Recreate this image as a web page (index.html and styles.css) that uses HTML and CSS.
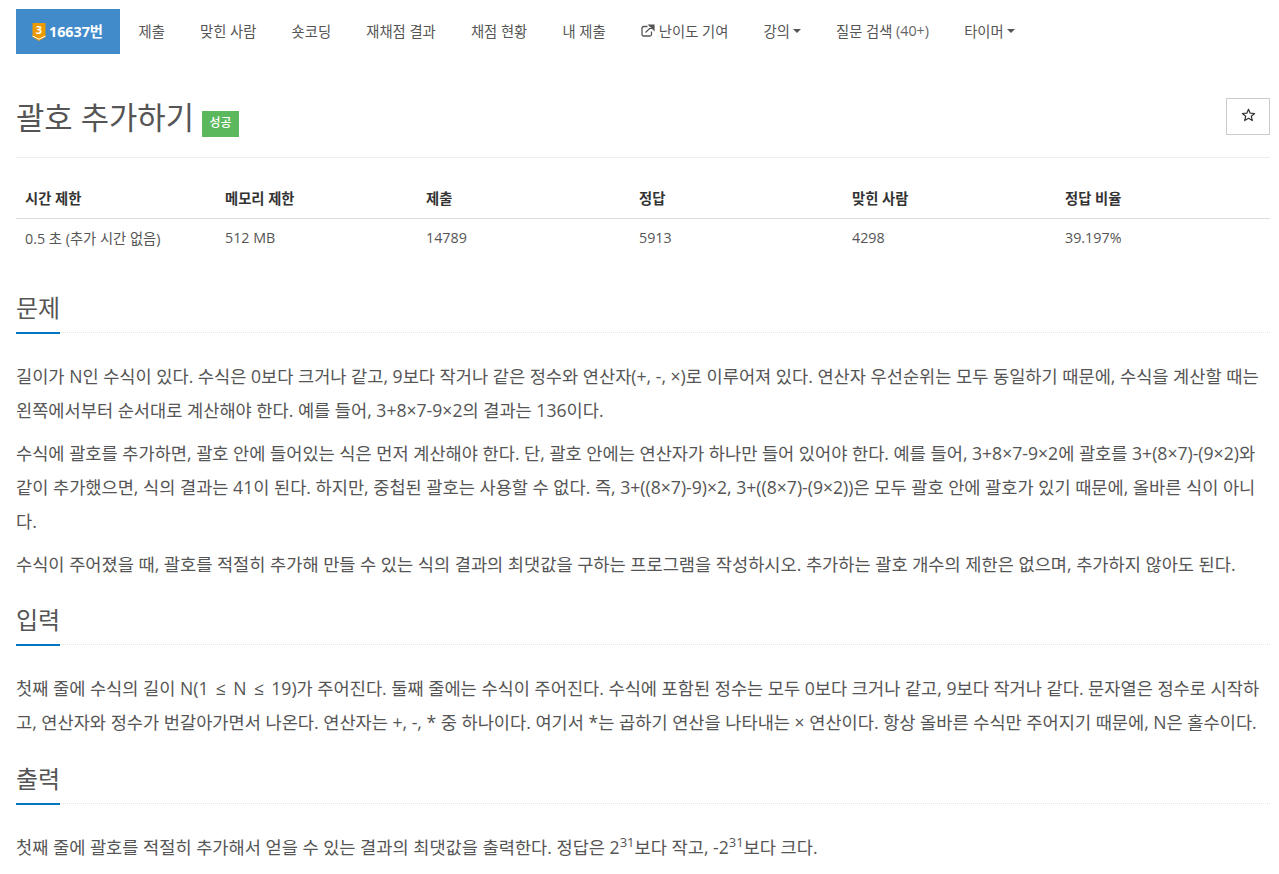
FILE: index.html
```html
<!DOCTYPE html>
<html lang="ko">
<head>
<meta charset="utf-8">
<title>괄호 추가하기</title>
<link rel="stylesheet" href="styles.css">
</head>
<body>
<div class="container">
  <ul class="nav">
    <li class="nav-item active">
      <svg class="tier" width="14" height="18" viewBox="0 0 14 18"><path d="M0.5 0H13.5V14L7 18L0.5 14Z" fill="#ec9a00"/><path d="M0.5 13L7 16.2L13.5 13" fill="none" stroke="#fff" stroke-width="1"/><text class="tier-num" x="7" y="11" text-anchor="middle">3</text></svg>
      <span>16637번</span>
    </li>
    <li class="nav-item">제출</li>
    <li class="nav-item">맞힌 사람</li>
    <li class="nav-item">숏코딩</li>
    <li class="nav-item">재채점 결과</li>
    <li class="nav-item">채점 현황</li>
    <li class="nav-item">내 제출</li>
    <li class="nav-item">
      <svg class="ext" width="14" height="13" viewBox="0 0 14 13"><path d="M10.5 7.5V10.5A1.5 1.5 0 0 1 9 12H2.5A1.5 1.5 0 0 1 1 10.5V4A1.5 1.5 0 0 1 2.5 2.5H6.5" fill="none" stroke="#555" stroke-width="1.3"/><path d="M4.5 8.5L11.5 1.8M8 1H13V6Z" fill="#555" stroke="#555" stroke-width="1.2"/></svg>
      <span>난이도 기여</span>
    </li>
    <li class="nav-item">강의<span class="caret"></span></li>
    <li class="nav-item">질문 검색&nbsp;<span class="count">(40+)</span></li>
    <li class="nav-item">타이머<span class="caret"></span></li>
  </ul>

  <div class="title-row">
    <h1 class="title">괄호 추가하기 <span class="label">성공</span></h1>
    <button class="star-btn"><svg width="15" height="14" viewBox="0 0 15 14"><path d="M7.5 1.2L9.2 5.2L13.6 5.5L10.3 8.3L11.3 12.6L7.5 10.3L3.7 12.6L4.7 8.3L1.4 5.5L5.8 5.2Z" fill="none" stroke="#333" stroke-width="1.2" stroke-linejoin="round"/></svg></button>
  </div>

  <table class="info">
    <thead>
      <tr><th class="c1">시간 제한</th><th class="c2">메모리 제한</th><th class="c3">제출</th><th class="c4">정답</th><th class="c5">맞힌 사람</th><th class="c6">정답 비율</th></tr>
    </thead>
    <tbody>
      <tr><td>0.5 초 (추가 시간 없음)</td><td>512 MB</td><td>14789</td><td>5913</td><td>4298</td><td>39.197%</td></tr>
    </tbody>
  </table>

  <section class="sec">
    <div class="head"><h2>문제</h2></div>
    <div class="body">
      <p>길이가 N인 수식이 있다. 수식은 0보다 크거나 같고, 9보다 작거나 같은 정수와 연산자(+, -, ×)로 이루어져 있다. 연산자 우선순위는 모두 동일하기 때문에, 수식을 계산할 때는 왼쪽에서부터 순서대로 계산해야 한다. 예를 들어, 3+8×7-9×2의 결과는 136이다.</p>
      <p>수식에 괄호를 추가하면, 괄호 안에 들어있는 식은 먼저 계산해야 한다. 단, 괄호 안에는 연산자가 하나만 들어 있어야 한다. 예를 들어, 3+8×7-9×2에 괄호를 3+(8×7)-(9×2)와 같이 추가했으면, 식의 결과는 41이 된다. 하지만, 중첩된 괄호는 사용할 수 없다. 즉, 3+((8×7)-9)×2, 3+((8×7)-(9×2))은 모두 괄호 안에 괄호가 있기 때문에, 올바른 식이 아니다.</p>
      <p>수식이 주어졌을 때, 괄호를 적절히 추가해 만들 수 있는 식의 결과의 최댓값을 구하는 프로그램을 작성하시오. 추가하는 괄호 개수의 제한은 없으며, 추가하지 않아도 된다.</p>
    </div>
  </section>

  <section class="sec">
    <div class="head"><h2>입력</h2></div>
    <div class="body">
      <p>첫째 줄에 수식의 길이 N(1 <span class="le">≤</span> N <span class="le">≤</span> 19)가 주어진다. 둘째 줄에는 수식이 주어진다. 수식에 포함된 정수는 모두 0보다 크거나 같고, 9보다 작거나 같다. 문자열은 정수로 시작하고, 연산자와 정수가 번갈아가면서 나온다. 연산자는 +, -, * 중 하나이다. 여기서 *는 곱하기 연산을 나타내는 × 연산이다. 항상 올바른 수식만 주어지기 때문에, N은 홀수이다.</p>
    </div>
  </section>

  <section class="sec">
    <div class="head"><h2>출력</h2></div>
    <div class="body">
      <p>첫째 줄에 괄호를 적절히 추가해서 얻을 수 있는 결과의 최댓값을 출력한다. 정답은 2<sup>31</sup>보다 작고, -2<sup>31</sup>보다 크다.</p>
    </div>
  </section>
</div>
</body>
</html>
```
FILE: styles.css
```css
* { box-sizing: border-box; }
html, body { margin: 0; padding: 0; }
body {
  font-family: "Open Sans", "Noto Sans CJK KR", sans-serif;
  color: #555;
  background: #fff;
  font-size: 14.3px;
  height: 874px;
  overflow: hidden;
}
.container { padding: 9px 9px 0 16px; }
.nav {
  list-style: none;
  margin: 0;
  padding: 0;
  display: flex;
  height: 45px;
}
.nav-item {
  display: flex;
  align-items: center;
  padding: 0 17.6px 3px;
  font-size: 14.3px;
  white-space: nowrap;
  color: #555;
}
.nav-item.active {
  background: #428bca;
  color: #fff;
  font-weight: 700;
  padding: 0 0 2px 16px;
  width: 104px;
  margin-right: 1px;
  gap: 3px;
}
.tier { flex: none; margin-top: 3px; overflow: visible; }
.tier-num { font-size: 11px; font-weight: 700; fill: #fff; }
.ext { margin-right: 4px; }
.caret {
  width: 0;
  height: 0;
  margin-left: 3px;
  margin-top: 2px;
  border-top: 4px solid #555;
  border-left: 4px solid transparent;
  border-right: 4px solid transparent;
}
.count { color: #666; }
.title-row {
  display: flex;
  justify-content: space-between;
  align-items: flex-start;
  margin-top: 44px;
  height: 60px;
  border-bottom: 1px solid #eee;
}
.title {
  margin: 0;
  font-size: 30.8px;
  font-weight: 400;
  line-height: 38px;
  color: #555;
  white-space: pre;
}
.label {
  display: inline-block;
  vertical-align: middle;
  background: #5cb85c;
  color: #fff;
  font-size: 12px;
  font-weight: 500;
  width: 37px;
  height: 26px;
  line-height: 24px;
  text-align: center;
  margin-top: 6px;
}
.star-btn {
  width: 44px;
  height: 37px;
  border: 1px solid #ccc;
  background: #fff;
  padding: 0 0 4px;
  display: flex;
  align-items: center;
  justify-content: center;
}
.info {
  width: 100%;
  margin-top: 21px;
  margin-bottom: 41px;
  border-collapse: collapse;
  table-layout: fixed;
  font-size: 14.3px;
}
.info th {
  text-align: left;
  font-weight: 700;
  color: #333;
  padding: 0 9px 2px;
  height: 39px;
  border-bottom: 1px solid #ddd;
}
.info td {
  padding: 0 9px;
  height: 39px;
  color: #555;
}
.c1 { width: 200px; }
.c2 { width: 201px; }
.c3 { width: 213px; }
.c4, .c5 { width: 213px; }
.sec { display: block; }
.head {
  border-bottom: 1px dotted #e5e5e5;
  height: 35px;
  margin-top: 29.5px;
}
.sec:first-of-type .head { margin-top: 0; }
.head h2 {
  margin: 0;
  display: inline-block;
  white-space: nowrap;
  height: 36px;
  font-size: 24px;
  line-height: 20px;
  font-weight: 400;
  color: #555;
  border-bottom: 2px solid #0076c0;
}
.body { padding-top: 26px; font-size: 17.6px; }
.body p {
  margin: 0 0 8.8px;
  font-size: 17.6px;
  line-height: 34px;
  color: #555;
}
.le { margin: 0 2.8px; }
sup { font-size: 13px; line-height: 0; }
```
